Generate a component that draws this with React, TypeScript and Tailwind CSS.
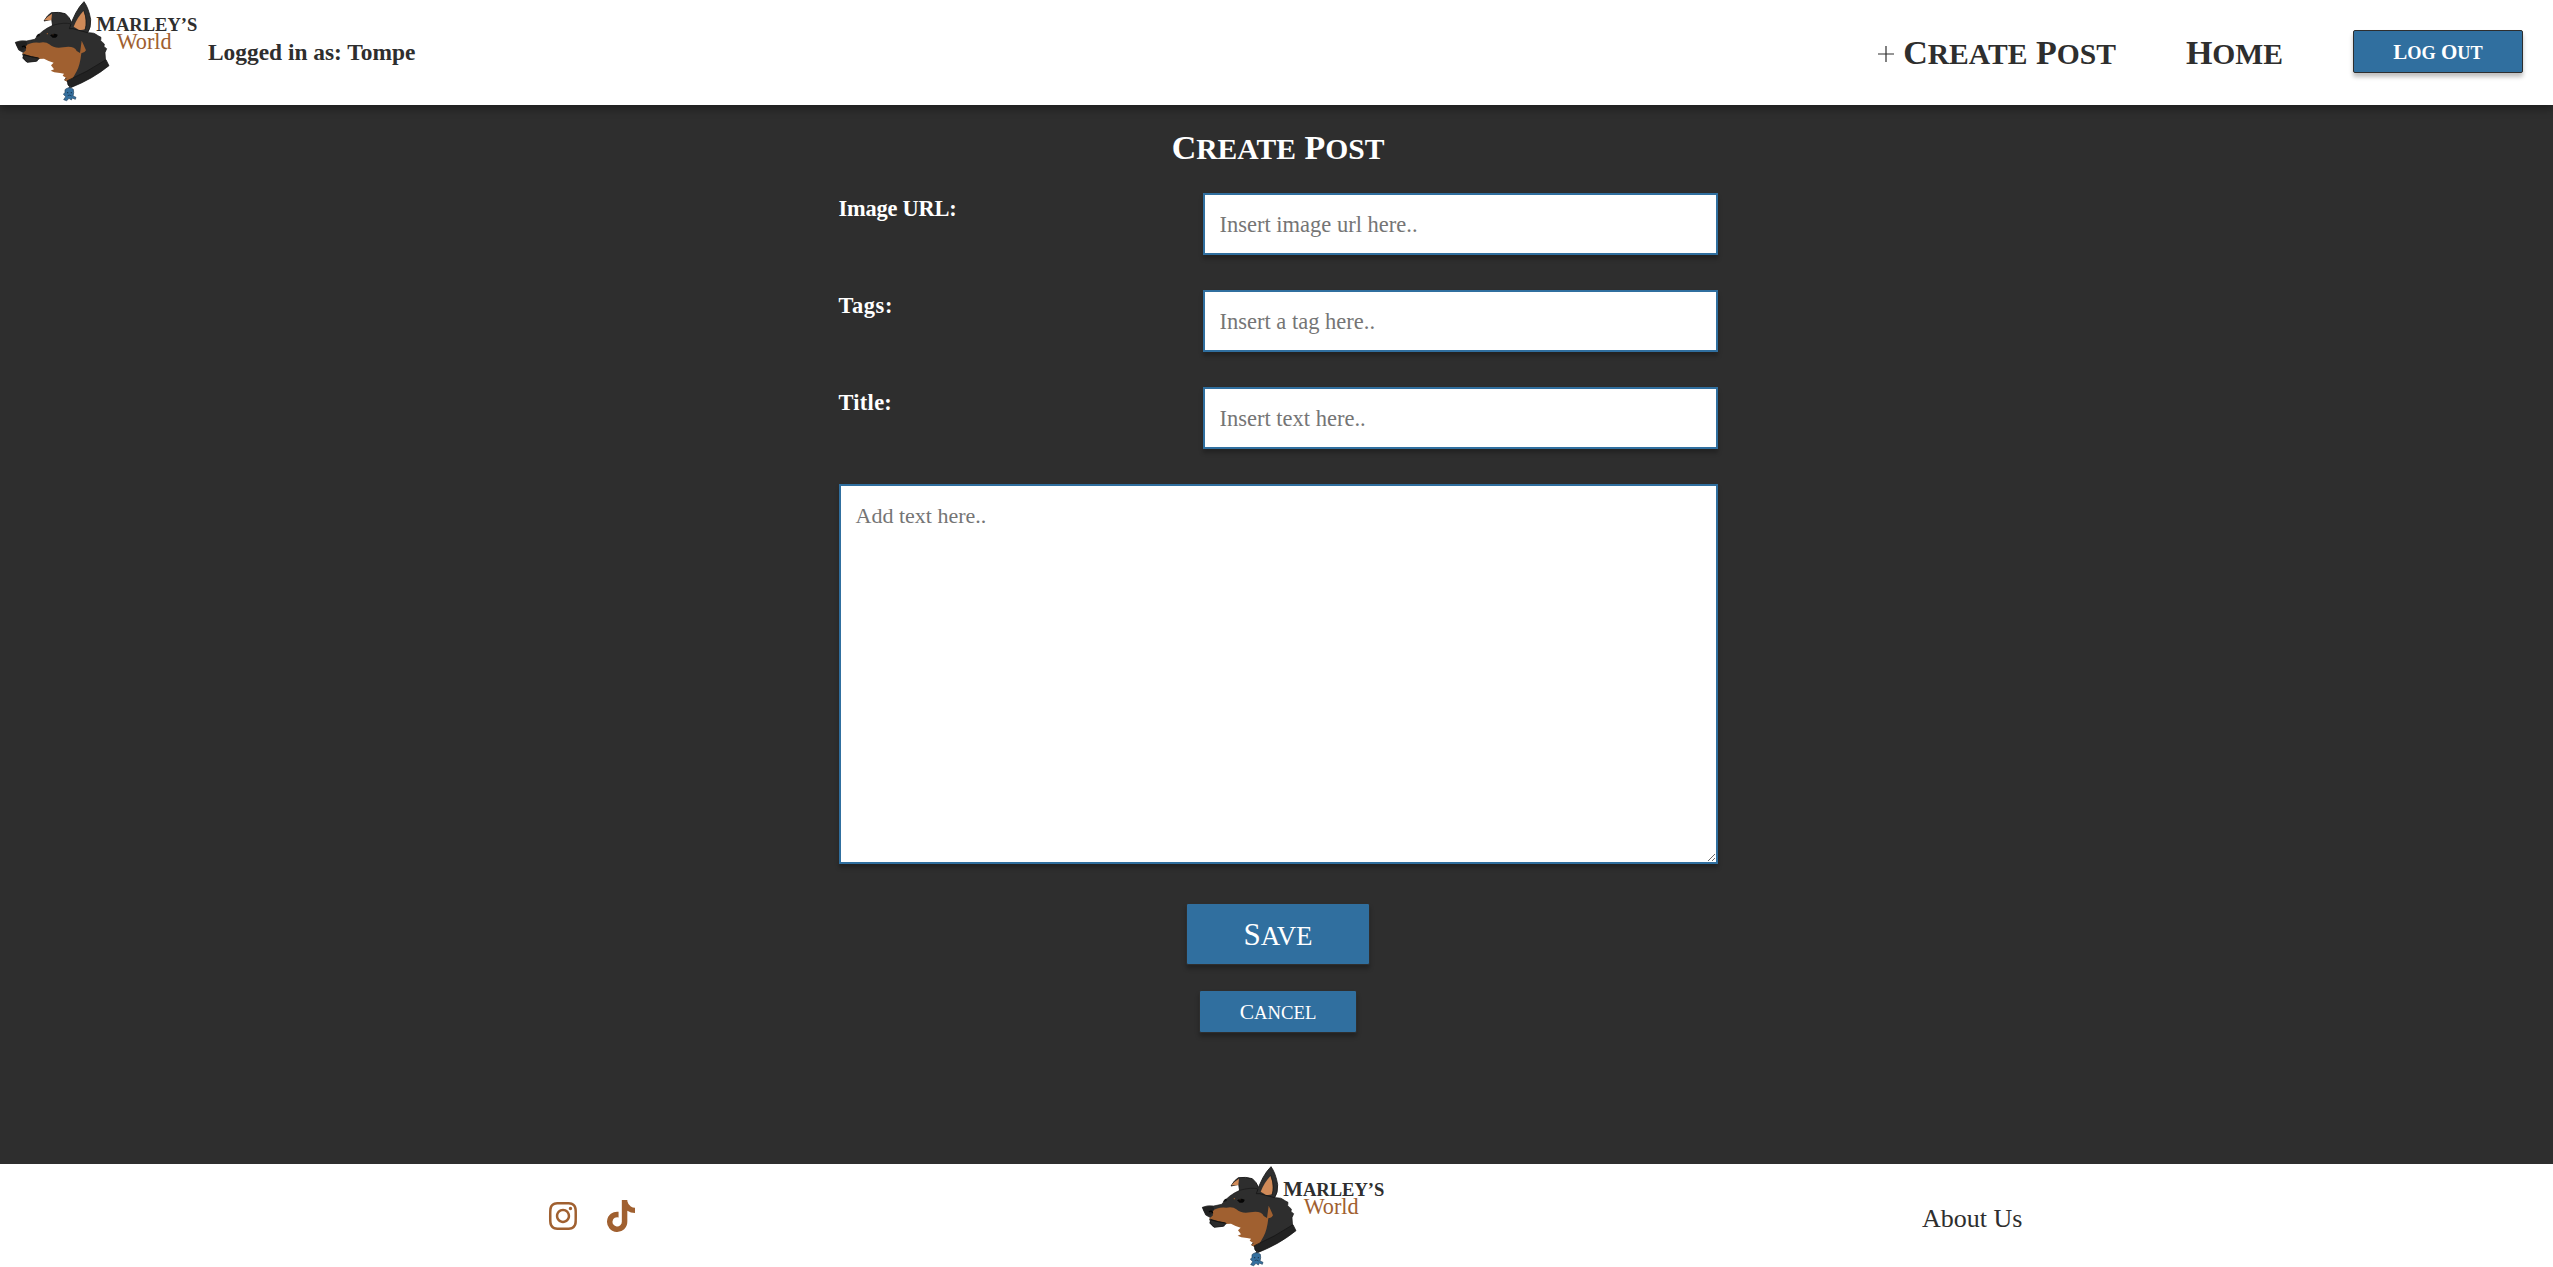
import React from "react";
import { FaInstagram, FaTiktok } from "react-icons/fa6";

/** Renders each word with a large initial and slightly smaller capitals. */
function SmallCaps({ children }: { children: string }) {
  return (
    <span className="whitespace-pre">
      {children.split(" ").map((word, i) => (
        <React.Fragment key={i}>
          {i > 0 ? " " : ""}
          <span>{word[0]}</span>
          <span className="text-[0.87em] uppercase">{word.slice(1)}</span>
        </React.Fragment>
      ))}
    </span>
  );
}

function Logo() {
  return (
    <svg viewBox="0 0 660 312" className="block h-[104px] w-[220px]" aria-label="Marley's World">
      {/* far ear */}
      <path d="M132 63 Q142 45 154 38 Q176 35 196 41 Q209 52 214 66 L206 78 L158 78 L155 58 Z" fill="#2e2e2e" stroke="#111" strokeWidth="2.5" strokeLinejoin="round" />
      <path d="M133 61 Q142 49 156 41 L154 61 Z" fill="#d08a58" />
      {/* head and neck */}
      <path d="M46 127 Q60 120 80 123 L104 118 Q124 91 158 76 Q192 66 216 72 L266 98 Q284 97 294 107 L303 112 L302 122 L313 132 L312 140 L320 146 L315 158 L317 184 L260 222 L206 246 L194 240 L204 224 L160 170 L108 172 L112 183 L80 186 L68 174 L74 160 L56 150 Z" fill="#2e2e2e" stroke="#181818" strokeWidth="2" strokeLinejoin="round" />
      {/* tan muzzle and jaw */}
      <path d="M76 138 Q92 125 118 128 Q138 124 148 133 Q163 147 190 142 Q222 136 230 153 L240 159 L245 122 Q251 134 258 151 Q254 159 244 160 Q240 196 230 214 L214 242 L204 246 L192 240 L200 235 L188 227 L192 221 L180 219 L163 217 L152 212 L162 208 L153 196 L161 188 Q146 184 132 176 L112 177 L93 170 L66 162 L78 151 Z" fill="#a06030" />
      <path d="M68 162 L94 170 L118 176 L108 184 L82 187 Q70 180 68 162 Z" fill="#2a2a2a" stroke="#151515" strokeWidth="2" strokeLinejoin="round" />
      <path d="M72 165 L94 170 L116 174" fill="none" stroke="#111" strokeWidth="3" />
      {/* nose */}
      <path d="M46 127 L76 124 Q87 133 76 140 Q73 153 61 151 Q49 142 46 127 Z" fill="#202020" />
      <path d="M66 141 Q75 134 77 145" fill="none" stroke="#030303" strokeWidth="4" />
      {/* eyes */}
      <path d="M108 112 Q112 99 120 102 L119 108 Z" fill="#141414" />
      <path d="M150 106 Q160 98 173 104 Q172 115 158 113 Z" fill="#050505" />
      <circle cx="159" cy="104" r="1.5" fill="#69472f" />
      <circle cx="142" cy="101" r="2" fill="#a06030" />
      {/* near ear */}
      <path d="M208 86 Q226 30 252 5 Q266 24 272 59 Q273 84 263 98 L240 92 L219 86 Z" fill="#2e2e2e" stroke="#151515" strokeWidth="2.5" strokeLinejoin="round" />
      <path d="M221 80 Q231 53 251 32 Q262 62 255 88 Q244 91 236 89 Z" fill="#d08a58" />
      <path d="M251 31 Q264 64 255 90" fill="none" stroke="#151515" strokeWidth="2" />
      {/* collar */}
      <path d="M202 242 Q262 216 318 179 L327 197 Q278 237 212 263 Q201 257 202 242 Z" fill="#222" stroke="#101010" strokeWidth="2" strokeLinejoin="round" />
      {/* tag */}
      <path d="M211 258 L205 270" stroke="#333" strokeWidth="5" />
      <path d="M195 269 Q207 258 220 268 L221 278 L219 288 L228 292 L226 298 L217 294 L214 300 L207 295 L200 302 L191 299 L197 290 L190 282 L195 279 Z" fill="#35709f" stroke="#24425d" strokeWidth="2" strokeLinejoin="round" />
      <circle cx="203" cy="278" r="2" fill="#173149" />
      <circle cx="214" cy="278" r="2" fill="#173149" />
      <path d="M203 287 Q209 283 215 288" fill="none" stroke="#173149" strokeWidth="2" />
      <text x="289" y="92" textLength="303" lengthAdjust="spacingAndGlyphs" fill="#2e2e2e" fontWeight="700" fontSize="66" fontFamily="'Liberation Serif', serif">
        M<tspan fontSize="59">ARLEY’S</tspan>
      </text>
      <text x="350" y="148" textLength="165" lengthAdjust="spacingAndGlyphs" fill="#a06030" fontSize="69" fontFamily="'Liberation Serif', serif">
        World
      </text>
    </svg>
  );
}

const SHADOW = "shadow-[0_4px_4px_rgba(0,0,0,0.25)]";

const fields = [
  { label: "Image URL:", placeholder: "Insert image url here..", tracking: "tracking-[-0.2px]" },
  { label: "Tags:", placeholder: "Insert a tag here..", tracking: "tracking-[0.6px]" },
  { label: "Title:", placeholder: "Insert text here..", tracking: "tracking-[0.3px]" },
];

export default function App() {
  return (
    <div className="flex h-[1267px] w-full flex-col overflow-hidden bg-[#2e2e2e] font-['Liberation_Serif',serif] text-[#2e2e2e]">
      <header className="z-10 flex h-[105px] shrink-0 items-center bg-white pr-[30px] shadow-[0_4px_8px_rgba(0,0,0,0.35)]">
        <div className="w-[208px] self-start">
          <Logo />
        </div>
        <p className="pt-px text-[23.4px] font-bold">Logged in as: Tompe</p>
        <nav className="ml-auto flex items-center text-[34px] leading-[40px] font-bold">
          <a className="flex items-center pt-[2px]">
            <svg viewBox="0 0 18 18" className="mr-[8px] size-[18px]" stroke="#2e2e2e" strokeWidth="1.2">
              <path d="M9 1v16M1 9h16" />
            </svg>
            <SmallCaps>Create Post</SmallCaps>
          </a>
          <a className="mr-[70px] ml-[70px] pt-[2px]">
            <SmallCaps>Home</SmallCaps>
          </a>
          <button className={`mb-[2px] h-[43px] w-[170px] rounded-[2px] border border-[#2e2e2e] bg-[#306f9f] pt-[2px] text-[21px] leading-[24px] text-white ${SHADOW}`}>
            <SmallCaps>Log Out</SmallCaps>
          </button>
        </nav>
      </header>

      <main className="flex flex-1 flex-col items-center pr-px pl-[4px]">
        <h1 className="mt-[23px] h-[65px] text-[34px] leading-[40px] font-bold text-white">
          <SmallCaps>Create Post</SmallCaps>
        </h1>
        <form className="flex w-[879px] flex-col items-center">
          {fields.map((f) => (
            <div key={f.label} className="mb-[35px] flex w-full justify-between">
              <label className={`pt-px text-[22.4px] leading-[30px] font-bold text-white ${f.tracking}`}>{f.label}</label>
              <input
                placeholder={f.placeholder}
                className={`h-[62px] w-[515px] border-2 border-[#306f9f] bg-white px-[15px] pt-[2px] text-[22.5px] placeholder:text-[#757575] ${SHADOW}`}
              />
            </div>
          ))}
          <textarea
            placeholder="Add text here.."
            className={`block h-[380px] w-full resize border-2 border-[#306f9f] bg-white px-[15px] pt-[15px] pb-[14px] text-[22px] leading-[30px] placeholder:text-[#757575] ${SHADOW}`}
          />
          <button type="button" className={`mt-[39px] h-[62px] w-[184px] rounded-[2px] border border-[#2e2e2e] bg-[#306f9f] pt-[3px] text-[31px] text-white ${SHADOW}`}>
            <SmallCaps>Save</SmallCaps>
          </button>
          <button type="button" className={`mt-[25px] h-[43px] w-[158px] rounded-[2px] border border-[#2e2e2e] bg-[#306f9f] pt-[2px] text-[21.5px] leading-[24px] text-white ${SHADOW}`}>
            <SmallCaps>Cancel</SmallCaps>
          </button>
        </form>
      </main>

      <footer className="grid h-[103px] shrink-0 grid-cols-[1188px_1fr_631px] bg-white">
        <div className="flex gap-[26px] pt-[36px] pl-[547px] text-[32px] text-[#a06030]">
          <FaInstagram />
          <FaTiktok />
        </div>
        <div className="-ml-px pt-px">
          <Logo />
        </div>
        <a className="pt-[40px] text-[26px] leading-[30px]">About Us</a>
      </footer>
    </div>
  );
}
